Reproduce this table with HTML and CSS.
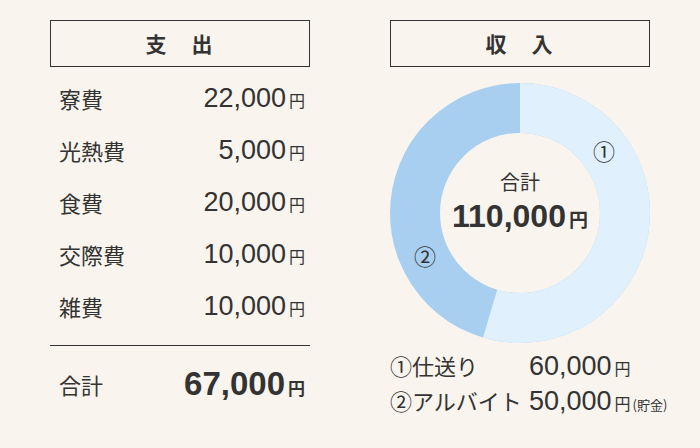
FILE: index.html
```html
<!DOCTYPE html>
<html lang="ja">
<head>
    <meta charset="UTF-8">
    <title>収支</title>
    <link rel="stylesheet" href="styles.css">
</head>
<body>
<div class="page">
    <div class="column">
        <h2 class="head">支　出</h2>
        <div class="row"><span class="label">寮費</span><span class="amount">22,000<small>円</small></span></div>
        <div class="row"><span class="label">光熱費</span><span class="amount">5,000<small>円</small></span></div>
        <div class="row"><span class="label">食費</span><span class="amount">20,000<small>円</small></span></div>
        <div class="row"><span class="label">交際費</span><span class="amount">10,000<small>円</small></span></div>
        <div class="row"><span class="label">雑費</span><span class="amount">10,000<small>円</small></span></div>
        <div class="row total"><span class="label">合計</span><span class="amount">67,000<small>円</small></span></div>
    </div>
    <div class="column">
        <h2 class="head">収　入</h2>
        <div class="donut">
            <svg width="260" height="260" viewBox="0 0 260 260">
                <!-- ②アルバイト -->
                <circle cx="130" cy="130" r="105" fill="none" stroke="#a9cff0" stroke-width="50"/>
                <!-- ①仕送り 60000 / 110000 -->
                <circle cx="130" cy="130" r="105" fill="none" stroke="#e0f0fd" stroke-width="50"
                        stroke-dasharray="359.85 659.73" transform="rotate(-90 130 130)"/>
            </svg>
            <span class="mark mark-1">①</span>
            <span class="mark mark-2">②</span>
            <div class="donut-center">
                <div class="donut-title">合計</div>
                <div class="donut-sum">110,000<small>円</small></div>
            </div>
        </div>
        <div class="legend">
            <span class="legend-label">①仕送り</span>
            <span class="legend-amount">60,000<small>円</small></span>
            <span class="legend-label">②アルバイト</span>
            <span class="legend-amount">50,000<small>円</small><em>(貯金)</em></span>
        </div>
    </div>
</div>
</body>
</html>
```

FILE: styles.css
```css
* {
    margin: 0;
    padding: 0;
    box-sizing: border-box;
}

body {
    background: #f9f5ee;
    color: #333;
    font-family: "Liberation Sans", "Noto Sans CJK JP", sans-serif;
}

.page {
    display: flex;
    gap: 80px;
    padding: 20px 0 0 50px;
}

.column {
    width: 260px;
}

.head {
    height: 47px;
    border: 1px solid #333;
    font: 700 21px "Noto Sans CJK JP", sans-serif;
    line-height: 45px;
    text-align: center;
    letter-spacing: 2px;
}

.row {
    display: flex;
    justify-content: space-between;
    align-items: center;
    height: 52px;
    padding: 0 5px 0 9px;
}

.row:first-of-type {
    margin-top: 5px;
}

.label {
    font: 22px "Noto Sans CJK JP", sans-serif;
}

.amount {
    font: 27px "Liberation Sans", sans-serif;
}

.amount small,
.legend-amount small {
    margin-left: 3px;
    font: 16px "Noto Sans CJK JP", sans-serif;
}

/* 合計行 */
.total {
    margin-top: 13px;
    height: 76px;
    border-top: 1px solid #333;
}

.total .amount {
    font-size: 33px;
    font-weight: 700;
}

.total .amount small {
    font-weight: 700;
    font-size: 17px;
}

.donut {
    position: relative;
    width: 260px;
    height: 260px;
    margin-top: 16px;
}

.donut svg {
    display: block;
}

.mark {
    position: absolute;
    font: 22px "Noto Sans CJK JP", sans-serif;
    line-height: 22px;
}

.mark-1 {
    left: 203px;
    top: 56px;
}

.mark-2 {
    left: 24px;
    top: 161px;
}

.donut-center {
    position: absolute;
    left: 0;
    right: 0;
    top: 85px;
    text-align: center;
}

.donut-title {
    font: 20px "Noto Sans CJK JP", sans-serif;
    line-height: 28px;
}

.donut-sum {
    font: 700 32px "Liberation Sans", sans-serif;
    line-height: 40px;
}

.donut-sum small {
    margin-left: 3px;
    font: 700 19px "Noto Sans CJK JP", sans-serif;
}

.legend {
    display: grid;
    grid-template-columns: 139px auto;
    row-gap: 2px;
    margin-top: 6px;
    align-items: baseline;
    white-space: nowrap;
}

.legend-label {
    font: 22px "Noto Sans CJK JP", sans-serif;
    line-height: 33px;
}

.legend-amount {
    font: 27px "Liberation Sans", sans-serif;
}

.legend-amount em {
    margin-left: 2px;
    font: normal 13px "Noto Sans CJK JP", sans-serif;
}
```
